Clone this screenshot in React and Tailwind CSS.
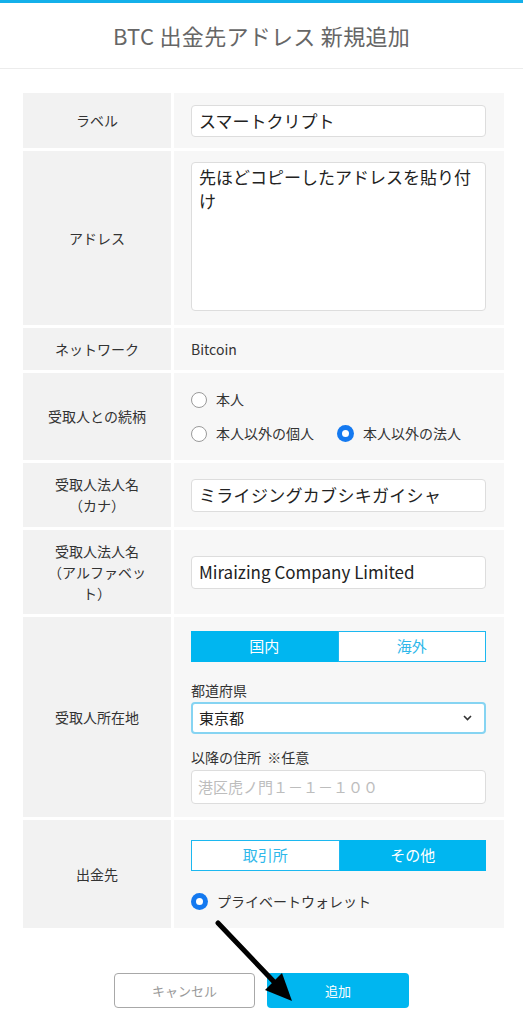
import React from "react";

const font = { fontFamily: '"Noto Sans CJK JP", "Noto Sans", sans-serif' };

function Radio({ checked }) {
  if (checked) {
    return (
      <span className="inline-flex h-[17px] w-[17px] items-center justify-center rounded-full bg-[#1479f0]">
        <span className="h-[7px] w-[7px] rounded-full bg-white" />
      </span>
    );
  }
  return <span className="inline-block h-[16px] w-[16px] rounded-full border-[1.5px] border-[#9a9a9a] bg-white" />;
}

function Label({ children, h }) {
  return (
    <div className={`flex items-center justify-center bg-[#f2f2f2] px-5 text-center text-[14px] leading-[21px] text-[#333] ${h}`}>
      {children}
    </div>
  );
}

function Value({ children, h, cls = "" }) {
  return <div className={`bg-[#f7f7f7] pl-[17px] pr-[18px] ${h} ${cls}`}>{children}</div>;
}

function TextBox({ children, cls = "" }) {
  return (
    <div className={`rounded-[4px] border border-[#dddddd] bg-white px-[7px] text-[17px] text-[#222] ${cls}`}>{children}</div>
  );
}

function Cell({ on, children }) {
  return on ? (
    <div className="flex flex-1 items-center justify-center bg-[#00b6f0] text-white">{children}</div>
  ) : (
    <div className="flex flex-1 items-center justify-center border-[1.5px] border-solid border-[#1cb8f0] bg-white text-[#2fb8ea]">{children}</div>
  );
}

function Toggle({ left, right, active }) {
  return (
    <div className="flex h-[31px] text-[15px]">
      <Cell on={active === 0}>{left}</Cell>
      <Cell on={active === 1}>{right}</Cell>
    </div>
  );
}

export default function App() {
  return (
    <div className="relative min-h-[1024px] w-[523px] bg-white" style={font}>
      <div className="h-[3px] bg-[#14b0ea]" />
      <div className="flex h-[66px] items-center justify-center border-b border-[#ececec] text-[22px] tracking-[0.3px] text-[#666]">
        BTC 出金先アドレス 新規追加
      </div>

      <div className="mx-[23px] mt-[24px] grid w-[481px] grid-cols-[148px_1fr] gap-x-[3px] gap-y-[3px]">
        <Label h="h-[55px]">ラベル</Label>
        <Value h="h-[55px]" cls="flex flex-col justify-center">
          <TextBox cls="flex h-[32px] items-center">スマートクリプト</TextBox>
        </Value>

        <Label h="h-[174px]">アドレス</Label>
        <Value h="h-[174px]" cls="pt-[11px]">
          <TextBox cls="h-[149px] pt-[2px] leading-[24px]">先ほどコピーしたアドレスを貼り付け</TextBox>
        </Value>

        <Label h="h-[42px]">ネットワーク</Label>
        <Value h="h-[42px]" cls="flex items-center text-[14px] text-[#333]">Bitcoin</Value>

        <Label h="h-[87px]">受取人との続柄</Label>
        <Value h="h-[87px]" cls="flex flex-col justify-center gap-[13px] text-[14px] text-[#333]">
          <div className="flex items-center gap-[9px]">
            <Radio />
            <span>本人</span>
          </div>
          <div className="flex items-center">
            <Radio />
            <span className="ml-[9px]">本人以外の個人</span>
            <span className="ml-[23px] flex"><Radio checked /></span>
            <span className="ml-[9px]">本人以外の法人</span>
          </div>
        </Value>

        <Label h="h-[64px]">受取人法人名<br />（カナ）</Label>
        <Value h="h-[64px]" cls="flex flex-col justify-center">
          <TextBox cls="flex h-[33px] items-center tracking-[0.3px]">ミライジングカブシキガイシャ</TextBox>
        </Value>

        <Label h="h-[84px]">受取人法人名（アルファベット）</Label>
        <Value h="h-[84px]" cls="flex flex-col justify-center">
          <TextBox cls="flex h-[33px] items-center text-[17.5px]">Miraizing Company Limited</TextBox>
        </Value>

        <Label h="h-[200px]">受取人所在地</Label>
        <Value h="h-[200px]" cls="pt-[14px]">
          <Toggle left="国内" right="海外" active={0} />
          <div className="mt-[18px] text-[14px] leading-[20px] text-[#333]">都道府県</div>
          <div className="mt-[2px] flex h-[32px] items-center justify-between rounded-[4px] border-2 border-solid border-[#86d4f2] bg-white pl-[6px] pr-[12px] text-[15px] text-[#222]">
            <span>東京都</span>
            <svg width="9" height="6" viewBox="0 0 9 6"><path d="M1 1l3.5 3.5L8 1" fill="none" stroke="#333" strokeWidth="1.6" /></svg>
          </div>
          <div className="mt-[13px] text-[14px] leading-[20px] text-[#333]">以降の住所&nbsp;&nbsp;※任意</div>
          <div className="mt-[3px] flex h-[34px] items-center rounded-[4px] border border-[#dddddd] bg-white px-[6px] text-[15px] text-[#bdbdbd]">
            港区虎ノ門１－１－１００
          </div>
        </Value>

        <Label h="h-[108px]">出金先</Label>
        <Value h="h-[108px]" cls="pt-[20px]">
          <Toggle left="取引所" right="その他" active={1} />
          <div className="mt-[20px] flex items-center gap-[9px] text-[14px] text-[#333]">
            <Radio checked />
            <span>プライベートウォレット</span>
          </div>
        </Value>
      </div>

      <div className="mt-[45px] flex justify-center gap-[12px]">
        <div className="flex h-[35px] w-[141px] items-center justify-center rounded-[4px] border border-[#a8a8a8] bg-white text-[13px] text-[#999]">
          キャンセル
        </div>
        <div className="flex h-[35px] w-[142px] items-center justify-center rounded-[4px] bg-[#00b6f0] text-[13px] text-white">
          追加
        </div>
      </div>

      <svg className="pointer-events-none absolute left-0 top-0" width="523" height="1024">
        <line x1="218" y1="923" x2="278" y2="986" stroke="#000" strokeWidth="5" strokeLinecap="round" />
        <polygon points="292,1001 265,990 282,973" fill="#000" />
      </svg>
    </div>
  );
}
